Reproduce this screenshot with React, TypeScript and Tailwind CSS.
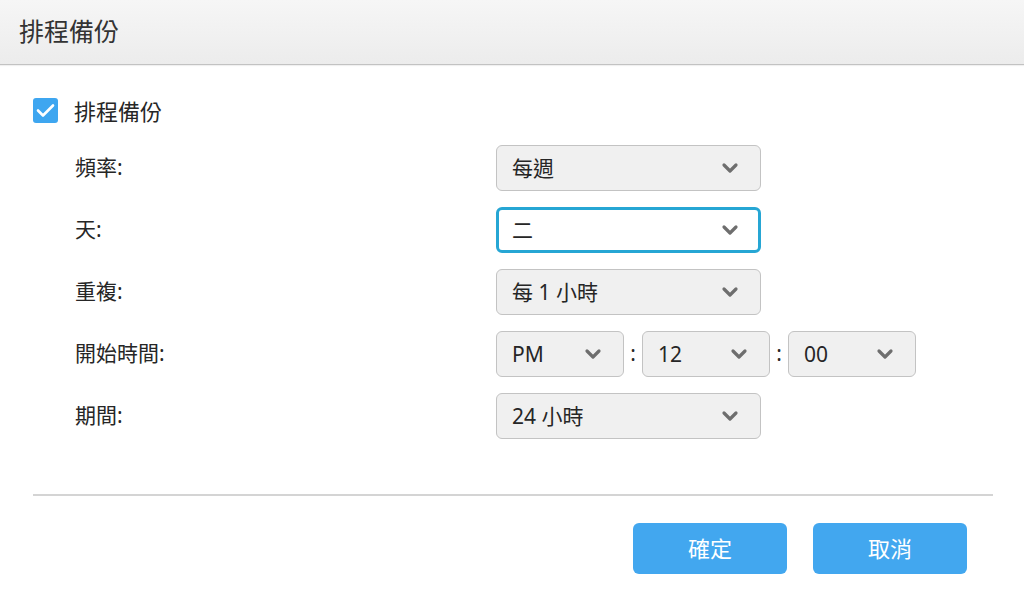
import React from 'react';

const font = { fontFamily: '"Noto Sans", "Noto Sans CJK TC", sans-serif' };

function Chevron() {
  return (
    <svg width="18" height="12" viewBox="0 0 18 12" className="shrink-0">
      <polyline points="3,3 9,9 15,3" fill="none" stroke="#6e6e6e" strokeWidth="3.2" strokeLinecap="round" strokeLinejoin="round" />
    </svg>
  );
}

function Select({ value, width, focused }: { value: string; width: string; focused?: boolean }) {
  return (
    <div
      className={
        focused
          ? `${width} h-[46px] flex items-center justify-between pl-[13px] pr-[19px] rounded-[6px] border-[3px] border-[#26a6d4] bg-white`
          : `${width} h-[46px] flex items-center justify-between pl-[15px] pr-[21px] rounded-[6px] border border-[#c3c3c3] bg-[#f0f0f0]`
      }
    >
      <span className="text-[21px] text-[#262626] leading-none">{value}</span>
      <Chevron />
    </div>
  );
}

const rows: { label: string; value: string; focused?: boolean }[] = [
  { label: '頻率:', value: '每週' },
  { label: '天:', value: '二', focused: true },
  { label: '重複:', value: '每 1 小時' },
];

export default function App() {
  return (
    <div className="w-[1024px] h-[595px] bg-white flex flex-col overflow-hidden" style={font}>
      {/* header */}
      <div className="h-[65px] shrink-0 flex items-center px-[19px] bg-gradient-to-b from-[#f6f6f6] to-[#ececec] border-b border-[#c2c2c2] shadow-[0_1px_1px_rgba(0,0,0,0.06)]">
        <span className="text-[25px] text-[#333] leading-none pb-[1px]">排程備份</span>
      </div>

      <div className="flex flex-col pt-[33px] px-[33px]">
        {/* checkbox */}
        <div className="flex items-center gap-[16px] h-[25px]">
          <div className="w-[25px] h-[25px] rounded-[3px] bg-[#3ea6f0] flex items-center justify-center">
            <svg width="19" height="15" viewBox="0 0 19 15">
              <polyline points="2,7.5 7,12.5 17,2.5" fill="none" stroke="#fff" strokeWidth="2.6" strokeLinecap="round" strokeLinejoin="round" />
            </svg>
          </div>
          <span className="text-[22px] text-[#262626] leading-none">排程備份</span>
        </div>

        {/* form */}
        <div className="grid grid-cols-[421px_auto] gap-y-[16px] mt-[22px] pl-[42px]">
          {rows.map(r => (
            <React.Fragment key={r.label}>
              <div className="h-[46px] flex items-center text-[21px] text-[#262626]">{r.label}</div>
              <Select value={r.value} width="w-[265px]" focused={r.focused} />
            </React.Fragment>
          ))}
          <div className="h-[46px] flex items-center text-[21px] text-[#262626]">開始時間:</div>
          <div className="flex items-center">
            <Select value="PM" width="w-[128px]" />
            <span className="w-[18px] text-center text-[21px] text-[#262626]">:</span>
            <Select value="12" width="w-[128px]" />
            <span className="w-[18px] text-center text-[21px] text-[#262626]">:</span>
            <Select value="00" width="w-[128px]" />
          </div>
          <div className="h-[46px] flex items-center text-[21px] text-[#262626]">期間:</div>
          <Select value="24 小時" width="w-[265px]" />
        </div>

        <div className="mt-[55px] h-[2px] w-[960px] bg-[#d4d4d4]" />

        <div className="mt-[27px] flex justify-end gap-[26px] pr-[24px]">
          <button className="w-[154px] h-[51px] rounded-[6px] bg-[#42a7ef] text-white text-[22px]">確定</button>
          <button className="w-[154px] h-[51px] rounded-[6px] bg-[#42a7ef] text-white text-[22px]">取消</button>
        </div>
      </div>
    </div>
  );
}
